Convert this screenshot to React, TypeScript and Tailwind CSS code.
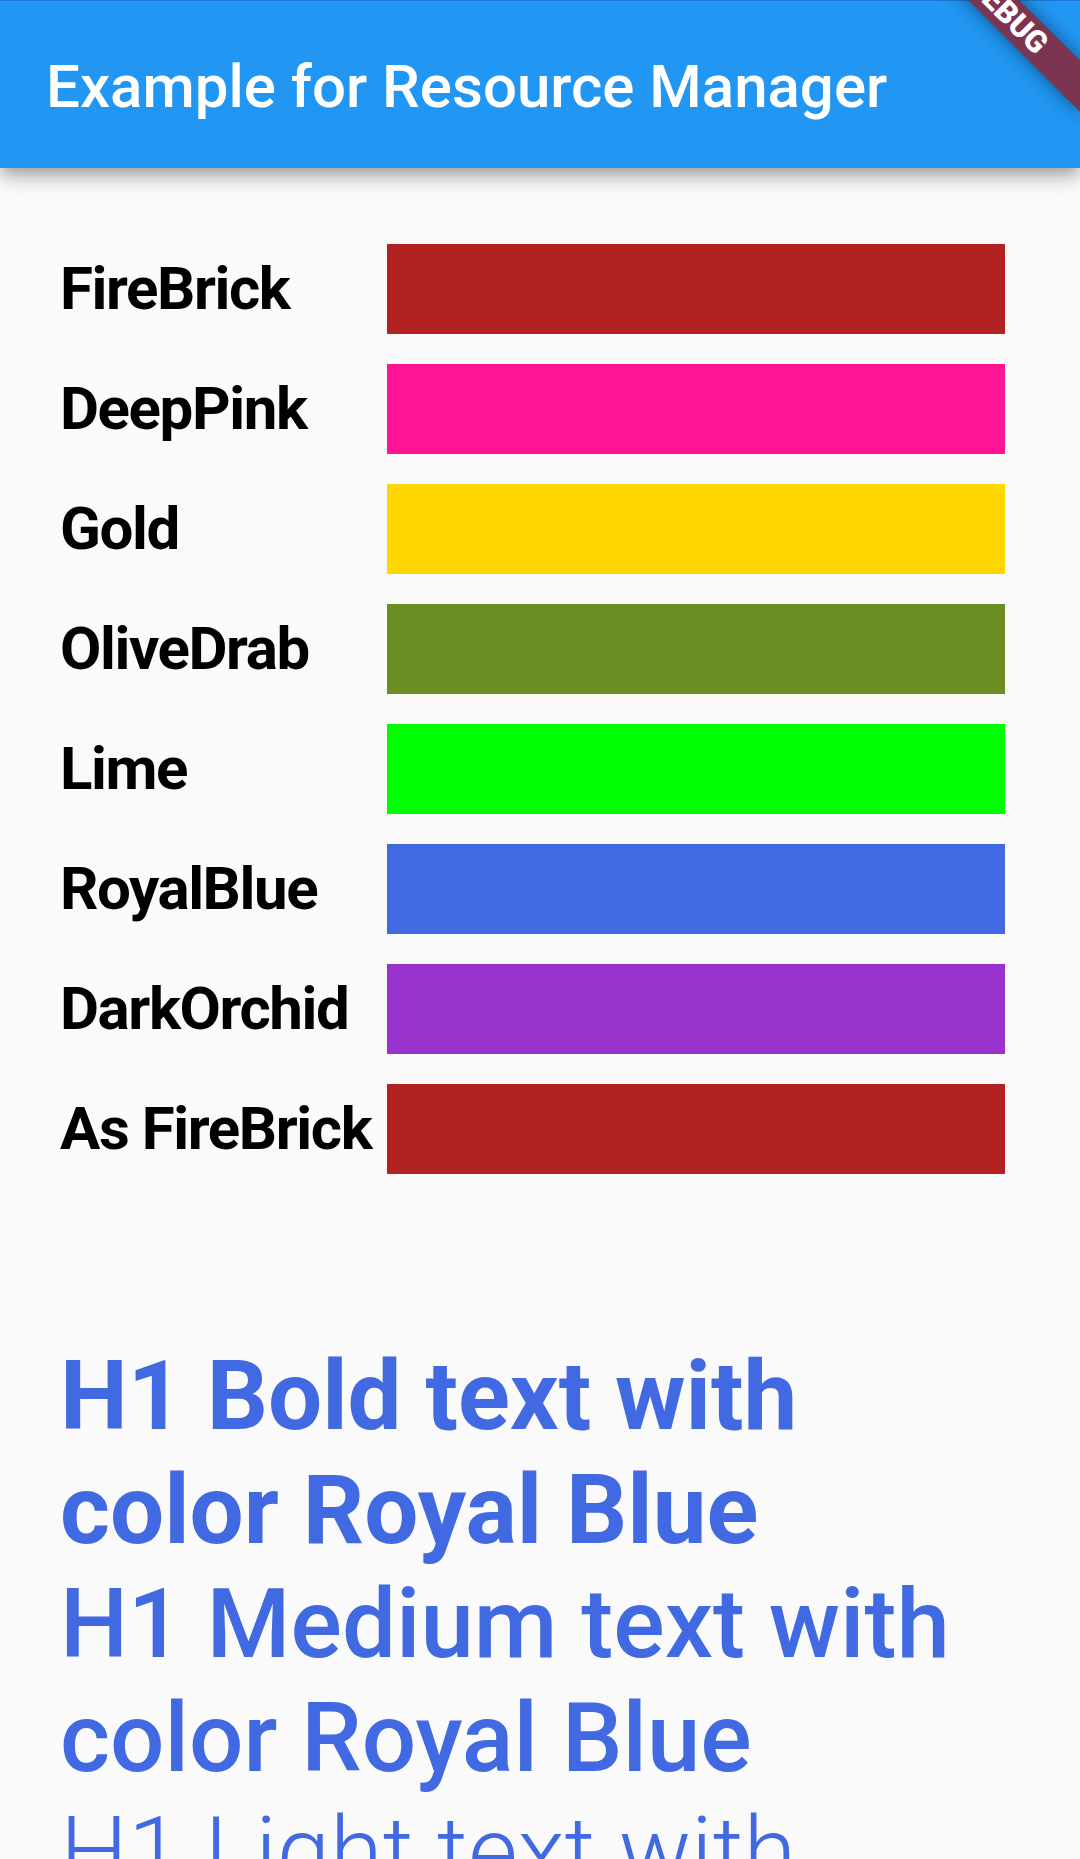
import React from 'react';

const swatches: { label: string; color: string }[] = [
  { label: 'FireBrick', color: 'bg-[#b22222]' },
  { label: 'DeepPink', color: 'bg-[#ff1493]' },
  { label: 'Gold', color: 'bg-[#ffd700]' },
  { label: 'OliveDrab', color: 'bg-[#6b8e23]' },
  { label: 'Lime', color: 'bg-[#00ff00]' },
  { label: 'RoyalBlue', color: 'bg-[#4169e1]' },
  { label: 'DarkOrchid', color: 'bg-[#9932cc]' },
  { label: 'As FireBrick', color: 'bg-[#b22222]' },
];

const DebugBanner: React.FC = () => (
  <div className="absolute right-0 top-[-58px] w-0 h-0 rotate-45 origin-top-left pointer-events-none z-20">
    <div className="absolute left-[-120px] top-[84px] w-[240px] h-[36px] bg-[#7d3450] shadow-[0_0_18px_rgba(0,0,0,0.45)] flex items-center justify-center">
      <span className="text-white text-[30.6px] leading-none font-black">DEBUG</span>
    </div>
  </div>
);

export default function App() {
  return (
    <div className="relative w-[1080px] h-[1859px] overflow-hidden bg-[#fafafa] font-['Roboto',sans-serif]">
      <header className="relative z-10 h-[168px] bg-[#2196f3] border-t border-[#1976d2] pl-[46px] pt-[51px] shadow-[0_6px_12px_-3px_rgba(0,0,0,0.2),0_12px_15px_0_rgba(0,0,0,0.14),0_3px_30px_0_rgba(0,0,0,0.12)]">
        <h1 className="text-white text-[60px] leading-[70px] font-medium">Example for Resource Manager</h1>
      </header>
      <DebugBanner />

      <main>
        <div className="flex flex-col gap-[30px] pt-[76px] pl-[60px]">
          {swatches.map(s => (
            <div key={s.label} className="flex items-center">
              <span className="w-[327px] text-black text-[60px] leading-[70px] font-bold tracking-[-1.4px] whitespace-nowrap">{s.label}</span>
              <div className={`w-[618px] h-[90px] ${s.color}`} />
            </div>
          ))}
        </div>

        <div className="mt-[165px] pl-[60px] pr-[70px] text-[#4169e1] text-[96px] leading-[114px]">
          <p className="font-bold">H1 Bold text with color Royal Blue</p>
          <p className="font-medium">H1 Medium text with color Royal Blue</p>
          <p className="font-light">H1 Light text with color Royal Blue</p>
        </div>
      </main>
    </div>
  );
}
